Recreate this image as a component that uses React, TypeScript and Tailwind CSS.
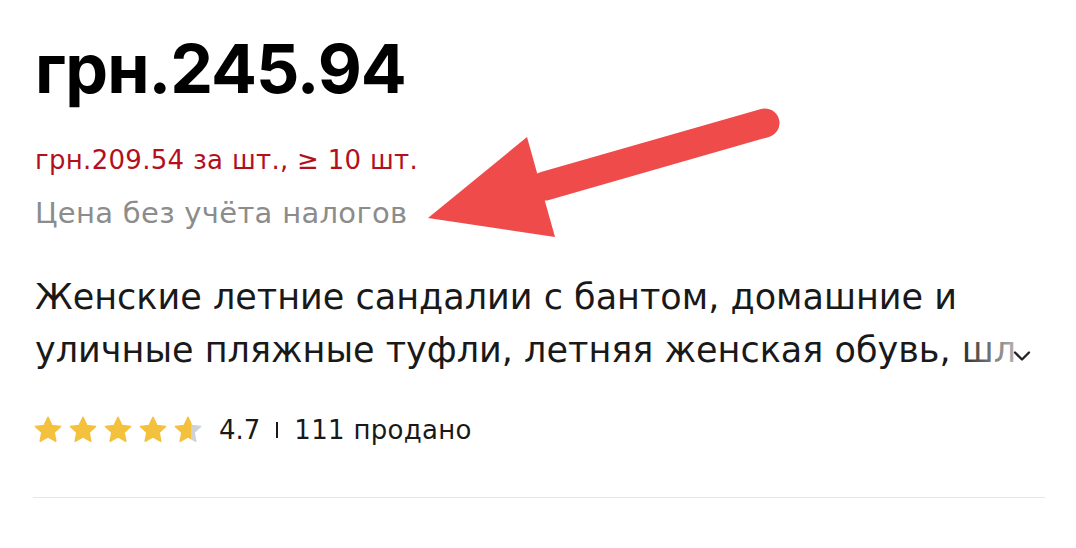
import { ChevronDown } from "lucide-react";

const Star = ({ fill = 1, id }: { fill?: number; id: string }) => (
  <svg width="30" height="30" viewBox="0 0 24 24">
    <defs>
      <linearGradient id={id} x1="0" x2="1" y1="0" y2="0">
        <stop offset={fill} stopColor="#f4c13d" />
        <stop offset={fill} stopColor="#cfd1d8" />
      </linearGradient>
    </defs>
    <path
      d="M12 1.8l3.05 6.5 7.05.85-5.2 4.85 1.38 6.98L12 17.5l-6.28 3.48 1.38-6.98-5.2-4.85 7.05-.85z"
      fill={`url(#${id})`}
      stroke={`url(#${id})`}
      strokeWidth="1.2"
      strokeLinejoin="round"
    />
  </svg>
);

export default function App() {
  return (
    <div className="relative w-[1076px] h-[548px] bg-white overflow-hidden font-['DejaVu_Sans',sans-serif]">
      <div className="pl-[35px] pr-[31px] pt-[28px]">
        <div className="font-['Inter',sans-serif] text-[68px] leading-[80px] font-bold text-black tracking-[-1px]">грн.245.94</div>

        <div className="mt-[36px] text-[26px] leading-[32px] text-[#b3101c] tracking-[0.3px]">грн.209.54 за шт., ≥ 10 шт.</div>
        <div className="mt-[19px] text-[29px] leading-[36px] text-[#8c8c8c] tracking-[0.3px]">Цена без учёта налогов</div>

        <div className="relative mt-[40px] text-[35px] leading-[53px] text-[#191919]">
          <div className="whitespace-nowrap">Женские летние сандалии с бантом, домашние и</div>
          <div className="whitespace-nowrap">уличные пляжные туфли, летняя женская обувь, шл</div>
          <div className="absolute right-0 bottom-0 h-[53px] w-[90px] flex items-center justify-end bg-gradient-to-r from-white/0 via-white/50 to-white">
            <ChevronDown className="mr-[9px] mt-[10px] text-[#222]" size={28} strokeWidth={2} />
          </div>
        </div>

        <div className="mt-[38px] flex items-center h-[30px]">
          <div className="flex gap-[5px] -ml-[2px]">
            <Star id="s1" />
            <Star id="s2" />
            <Star id="s3" />
            <Star id="s4" />
            <Star id="s5" fill={0.6} />
          </div>
          <span className="ml-[16px] text-[26px] text-[#191919]">4.7</span>
          <span className="mx-[16px] w-[2px] h-[16px] bg-[#191919]" />
          <span className="text-[26px] text-[#191919] tracking-[0.3px]">111 продано</span>
        </div>

        <div className="mt-[52px] border-t border-[#e6e6e6] -ml-[2px]" />
      </div>

      <svg className="absolute inset-0 pointer-events-none" width="1076" height="548">
        <line x1="545" y1="186" x2="765" y2="123" stroke="#ef4b4b" strokeWidth="29" strokeLinecap="round" />
        <polygon points="428,218 527,137 555,237" fill="#ef4b4b" />
      </svg>
    </div>
  );
}
